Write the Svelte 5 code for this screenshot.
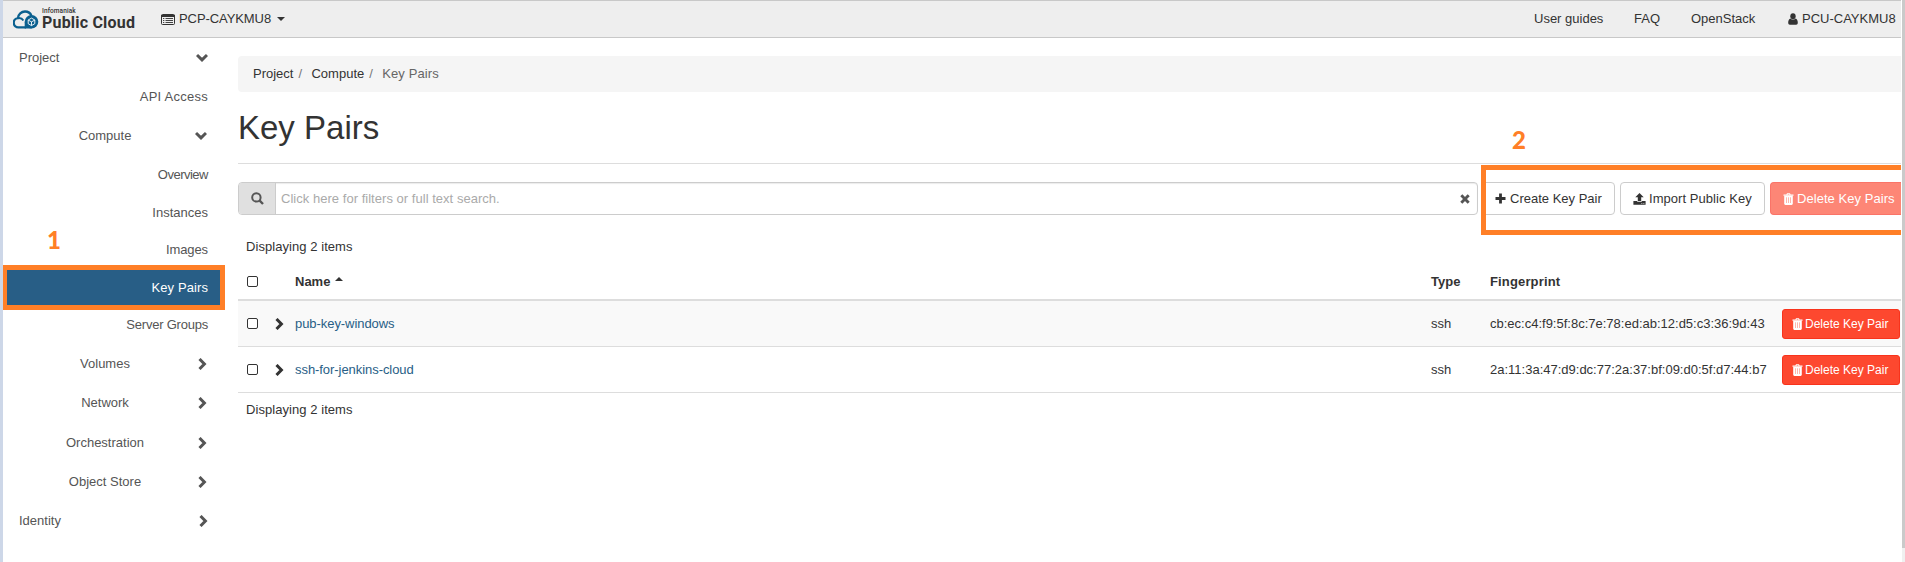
<script lang="ts">
  type Item = {
    label: string;
    kind: 'root' | 'group' | 'leaf';
    open?: boolean;
    active?: boolean;
    tall?: boolean;
    spacing?: number;
  };

  const menu: Item[] = [
    { label: 'Project', kind: 'root', open: true },
    { label: 'API Access', kind: 'leaf', tall: true, spacing: 0.25 },
    { label: 'Compute', kind: 'group', open: true },
    { label: 'Overview', kind: 'leaf', spacing: -0.5 },
    { label: 'Instances', kind: 'leaf' },
    { label: 'Images', kind: 'leaf', spacing: -0.1 },
    { label: 'Key Pairs', kind: 'leaf', active: true, spacing: 0.1 },
    { label: 'Server Groups', kind: 'leaf', spacing: -0.22 },
    { label: 'Volumes', kind: 'group' },
    { label: 'Network', kind: 'group' },
    { label: 'Orchestration', kind: 'group' },
    { label: 'Object Store', kind: 'group' },
    { label: 'Identity', kind: 'root' }
  ];

  const keyPairs = [
    { name: 'pub-key-windows', type: 'ssh', fingerprint: 'cb:ec:c4:f9:5f:8c:7e:78:ed:ab:12:d5:c3:36:9d:43' },
    { name: 'ssh-for-jenkins-cloud', type: 'ssh', fingerprint: '2a:11:3a:47:d9:dc:77:2a:37:bf:09:d0:5f:d7:44:b7' }
  ];

  let search = $state('');
</script>

{#snippet chevron(open: boolean)}
  <svg class="chevron" class:open viewBox="0 0 9 12" width="9" height="12">
    <path d="M1.5 1 6.400 6 1.500 11" fill="none" stroke="currentColor" stroke-width="3" />
  </svg>
{/snippet}

{#snippet trash()}
  <svg viewBox="0 0 11 12" width="11" height="12" fill="currentColor">
    <path fill-rule="evenodd" d="M3.4 1.5 4 .3h3l.6 1.2h2.900v1.300H.5V1.500zm1.100 0h2L6.200 1H4.800z" />
    <path d="M1.200 2.800h8.600v7.700c0 .9-.5 1.400-1.200 1.400H2.400c-.7 0-1.200-.5-1.200-1.400z" />
    <path class="slits" d="M3.500 4.300v5.700M5.500 4.300v5.700M7.500 4.300v5.700" />
  </svg>
{/snippet}

<div class="window">
  <header>
    <div class="brand">
      <svg viewBox="0 0 26 19" width="26" height="19">
        <path d="M13 17.300H5.800a4.600 4.600 0 0 1-.9-9.200C5.300 4.200 8.400 1.500 12 1.500c3 0 5.500 1.700 6.500 4.300" fill="none" stroke="#0b608f" stroke-width="2.3" />
        <path d="M5 8.100c2.400-.3 4.300.5 5.400 2.300" fill="none" stroke="#0b608f" stroke-width="2" />
        <circle cx="18.5" cy="11.7" r="6.8" fill="#0b608f" />
        <path d="M11.700 12v6.400h7v-3z" fill="#0b608f" />
        <path d="m18.500 8.100 3.300 1.900v3.700l-3.300 1.900-3.300-1.900V10zm-3.200 2 3.200 1.800 3.200-1.800m-3.200 1.800v3.600" fill="none" stroke="#fff" stroke-width=".9" />
      </svg>
      <div class="brand-text">
        <small>Infomaniak</small>
        <b>Public Cloud</b>
      </div>
    </div>
    <div class="project">
      <svg viewBox="0 0 14 11" width="14" height="11">
        <rect x=".5" y=".5" width="13" height="10" rx="1" fill="none" stroke="#333" />
        <path d="M0 1h14v2H0z" fill="#333" />
        <path d="M2 4.500h1.300M2 6.500h1.300M2 8.500h1.300M4.500 4.500H12M4.500 6.500H12M4.500 8.500H12" stroke="#444" />
      </svg>
      <span>PCP-CAYKMU8</span>
      <i class="caret"></i>
    </div>
    <nav>
      <span class="guides">User guides</span>
      <span class="faq">FAQ</span>
      <span class="openstack">OpenStack</span>
      <svg viewBox="0 0 10 12" width="10" height="12" fill="#333">
        <ellipse cx="5" cy="3.2" rx="2.7" ry="3" />
        <path d="M2.500 5.400C1 5.800.2 7.400.2 9.800c0 1.200.7 1.900 1.600 1.900h6.400c.9 0 1.600-.7 1.600-1.900 0-2.400-.8-4-2.300-4.400a3.600 3.600 0 0 1-5 0z" />
      </svg>
      <span class="user">PCU-CAYKMU8</span>
      <i class="caret"></i>
    </nav>
  </header>

  <div class="body">
    <aside>
      {#each menu as item}
        <div class="item {item.kind}" class:active={item.active} class:tall={item.tall}>
          <span style="letter-spacing: {item.spacing ?? 0}px">{item.label}</span>
          {#if item.kind !== 'leaf'}{@render chevron(!!item.open)}{/if}
        </div>
      {/each}
      <b class="step one">1</b>
    </aside>

    <main>
      <div class="breadcrumb">
        <span>Project</span><i>/</i><span>Compute</span><i>/</i><em>Key Pairs</em>
      </div>
      <h1>Key Pairs</h1>

      <div class="toolbar">
        <div class="search">
          <div class="addon">
            <svg viewBox="0 0 13 13" width="13" height="13" fill="none" stroke="#555">
              <circle cx="5.4" cy="5.4" r="4.2" stroke-width="2" />
              <path d="m8.400 8.400 3.600 3.600" stroke-width="2.4" />
            </svg>
          </div>
          <input type="text" bind:value={search} placeholder="Click here for filters or full text search." />
          <svg class="clear" viewBox="0 0 10 10" width="10" height="10">
            <path d="m1.300 1.300 7.400 7.400m0-7.400L1.300 8.700" stroke="#555" stroke-width="2.9" />
          </svg>
        </div>
        <button class="create">
          <svg viewBox="0 0 11 11" width="11" height="11"><path d="M5.500.5v10M.5 5.500h10" stroke="#333" stroke-width="2.8" /></svg>
          Create Key Pair
        </button>
        <button class="import">
          <svg viewBox="0 0 13 12" width="13" height="12" fill="#333">
            <path d="M6.500 0 10.700 4.300H8.200v3.900H4.800V4.300H2.300z" />
            <path fill-rule="evenodd" d="M.4 8H4c.2.8.8 1.100 1.500 1.100h2C8.200 9.100 8.800 8.800 9 8h3.600v3.700H.4zm8 2v.8h.9V10zm2 0v.8h.9V10z" />
          </svg>
          Import Public Key
        </button>
        <button class="delete-all" disabled>{@render trash()} Delete Key Pairs</button>
        <div class="highlight"></div>
        <b class="step two">2</b>
      </div>

      <p class="count">Displaying 2 items</p>
      <table>
        <colgroup>
          <col style="width: 29px" /><col style="width: 20px" /><col /><col style="width: 59px" />
          <col style="width: 292px" /><col style="width: 127px" />
        </colgroup>
        <thead>
          <tr>
            <th><i class="check"></i></th>
            <th></th>
            <th>Name <i class="caret up"></i></th>
            <th>Type</th>
            <th class="print">Fingerprint</th>
            <th></th>
          </tr>
        </thead>
        <tbody>
          {#each keyPairs as pair}
            <tr>
              <td><i class="check"></i></td>
              <td>{@render chevron(false)}</td>
              <td class="name">{pair.name}</td>
              <td>{pair.type}</td>
              <td>{pair.fingerprint}</td>
              <td><button class="delete">{@render trash()} Delete Key Pair</button></td>
            </tr>
          {/each}
        </tbody>
      </table>
      <p class="count bottom">Displaying 2 items</p>
    </main>
  </div>
  <div class="scrollbar"></div>
</div>

<style>
  .window {
    position: relative;
    box-sizing: border-box;
    width: 1905px;
    height: 562px;
    padding-right: 4px;
    border-left: 3px solid #cdd7e8;
    overflow: hidden;
    background: #fff;
    color: #333;
    font: 13px/18px "Liberation Sans", Arial, sans-serif;
  }

  .scrollbar {
    position: absolute;
    top: 0;
    right: 0;
    width: 3px;
    height: 548px;
    background: #cacaca;
    border-bottom: 14px solid #f0f0f0;
  }

  svg {
    display: block;
    flex: none;
  }

  i, em {
    font-style: normal;
  }

  header {
    display: flex;
    align-items: center;
    box-sizing: border-box;
    height: 38px;
    padding-left: 10px;
    overflow: hidden;
    background: #eee;
    border-top: 1px solid #c8c8c8;
    border-bottom: 1px solid #c8c8c8;
    white-space: nowrap;
  }

  .brand {
    display: flex;
    align-items: center;
    width: 148px;
    gap: 3px;
  }

  .brand-text {
    display: flex;
    flex-direction: column;
    margin-top: -1px;
    font-family: Roboto, sans-serif;
  }

  .brand-text small {
    font-size: 6.5px;
    line-height: 8px;
    font-weight: 500;
    letter-spacing: 0.1px;
  }

  .brand-text b {
    font-size: 16px;
    line-height: 16px;
    letter-spacing: 0.2px;
  }

  .project {
    display: flex;
    align-items: center;
    gap: 4px;
    letter-spacing: -0.08px;
  }

  .caret {
    display: inline-block;
    border: 4px solid transparent;
    border-top-color: #333;
    border-bottom: 0;
  }

  .project .caret {
    margin-left: 2px;
  }

  .caret.up {
    margin-left: 1px;
    border-width: 4.5px;
    border-bottom: 4px solid #333;
    border-top: 0;
    vertical-align: 5px;
  }

  nav {
    display: flex;
    flex: none;
    align-items: center;
    width: 367px;
    margin-left: auto;
  }

  nav > * {
    flex: none;
  }

  .guides { width: 100px; }
  .faq { width: 57px; }
  .openstack { width: 97px; }
  .user { margin: 0 5px 0 4px; }

  .body {
    display: flex;
  }

  aside {
    position: relative;
    width: 222px;
    margin-right: 13px;
    flex: none;
    color: #555;
  }

  .item {
    display: flex;
    align-items: center;
    justify-content: space-between;
    box-sizing: border-box;
    width: 222px;
    height: 39.4px;
    padding: 0 17px 0 16px;
  }

  .group {
    display: grid;
    grid-template-columns: 1fr 27px;
    width: 206px;
    padding: 0 2px 0 27px;
    text-align: center;
  }

  .group .chevron {
    margin-left: 18px;
  }

  .chevron.open {
    transform: rotate(90deg) translateY(1.5px);
  }

  .leaf {
    height: 37.6px;
    justify-content: flex-end;
  }

  .leaf.tall {
    height: 39.4px;
  }

  .leaf.active {
    height: 45px;
    margin: -4px 0 -3.5px;
    padding: 1px 12px 0 0;
    background: #285e86;
    border: 5px solid #ff7f27;
    border-left-width: 4px;
    color: #fff;
  }

  .step {
    position: absolute;
    color: #ff7f27;
    font: 900 24px/24px Lato, sans-serif;
  }

  .step.one {
    left: 44px;
    top: 190px;
  }

  .step.two {
    left: 1274px;
    top: -54px;
  }

  main {
    flex: 1;
    min-width: 0;
    padding-top: 18px;
  }

  .breadcrumb {
    display: flex;
    align-items: center;
    height: 36px;
    padding-left: 15px;
    background: #f5f5f5;
    border-radius: 4px 0 0 4px;
  }

  .breadcrumb i {
    width: 13px;
    padding-left: 5px;
    color: #777;
  }

  .breadcrumb em {
    color: #666;
    letter-spacing: 0.1px;
  }

  h1 {
    height: 71px;
    margin: 0 0 18px;
    border-bottom: 1px solid #ddd;
    font-size: 33px;
    line-height: 71px;
    font-weight: normal;
  }

  .toolbar {
    position: relative;
    display: flex;
    height: 33px;
  }

  .search {
    display: flex;
    align-items: center;
    box-sizing: border-box;
    width: 1240px;
    margin-right: 3px;
    border: 1px solid #ccc;
    border-radius: 4px;
    box-shadow: inset 0 1px 1px rgba(0, 0, 0, 0.08);
  }

  .addon {
    display: flex;
    align-items: center;
    justify-content: center;
    width: 36px;
    height: 31px;
    border-right: 1px solid #ccc;
    border-radius: 3px 0 0 3px;
    background: #e0e0e0;
  }

  input {
    flex: 1;
    padding: 0 5px;
    border: 0;
    outline: 0;
    background: none;
    font: inherit;
    letter-spacing: 0.03px;
  }

  input::placeholder {
    color: #aaa;
    opacity: 1;
  }

  .clear {
    margin-right: 7px;
  }

  button {
    display: flex;
    align-items: center;
    flex: none;
    box-sizing: border-box;
    height: 33px;
    gap: 4px;
    padding: 0 0 0 13px;
    border: 1px solid #ccc;
    border-radius: 4px;
    background: #fff;
    color: #333;
    font: inherit;
    white-space: nowrap;
  }

  .create {
    width: 134px;
    margin-right: 5px;
  }

  .import {
    width: 145px;
    margin-right: 5px;
    padding-left: 12px;
    gap: 3px;
    letter-spacing: 0.05px;
  }

  .delete-all {
    width: 131px;
    gap: 3px;
    padding-left: 12px;
    border-color: #fa7468;
    border-right: 0;
    border-radius: 4px 0 0 4px;
    background: #fd8676;
    color: #fff;
    letter-spacing: 0.05px;
  }

  .slits {
    fill: none;
    stroke: #fd8676;
    stroke-width: 0.6;
  }

  .highlight {
    position: absolute;
    top: -17px;
    left: 1243px;
    right: 0;
    height: 60px;
    border: 5px solid #ff7f27;
    border-right: 0;
  }

  .count {
    margin: 23px 0 16px 8px;
    letter-spacing: 0.06px;
  }

  .count.bottom {
    margin-top: 8px;
  }

  table {
    width: 1663px;
    table-layout: fixed;
    border-collapse: separate;
    border-spacing: 0;
  }

  th, td {
    padding: 0 0 0 8px;
    text-align: left;
    white-space: nowrap;
  }

  th {
    height: 19px;
    padding-bottom: 8px;
    border-bottom: 2px solid #ddd;
    vertical-align: middle;
  }

  .print {
    letter-spacing: 0.15px;
  }

  td {
    height: 45px;
    border-bottom: 1px solid #ddd;
  }

  tbody tr:first-child {
    background: #f9f9f9;
  }

  .check {
    display: block;
    box-sizing: border-box;
    width: 11px;
    height: 11px;
    margin-left: 1px;
    border: 1px solid #333;
    border-radius: 2px;
    background: #fff;
  }

  .name {
    color: #285e86;
    letter-spacing: -0.06px;
  }

  .delete {
    width: 118px;
    height: 30px;
    gap: 2px;
    padding-left: 9px;
    border-color: #f8331c;
    border-radius: 3px;
    background: #fd482f;
    color: #fff;
    font-size: 12px;
  }
</style>
